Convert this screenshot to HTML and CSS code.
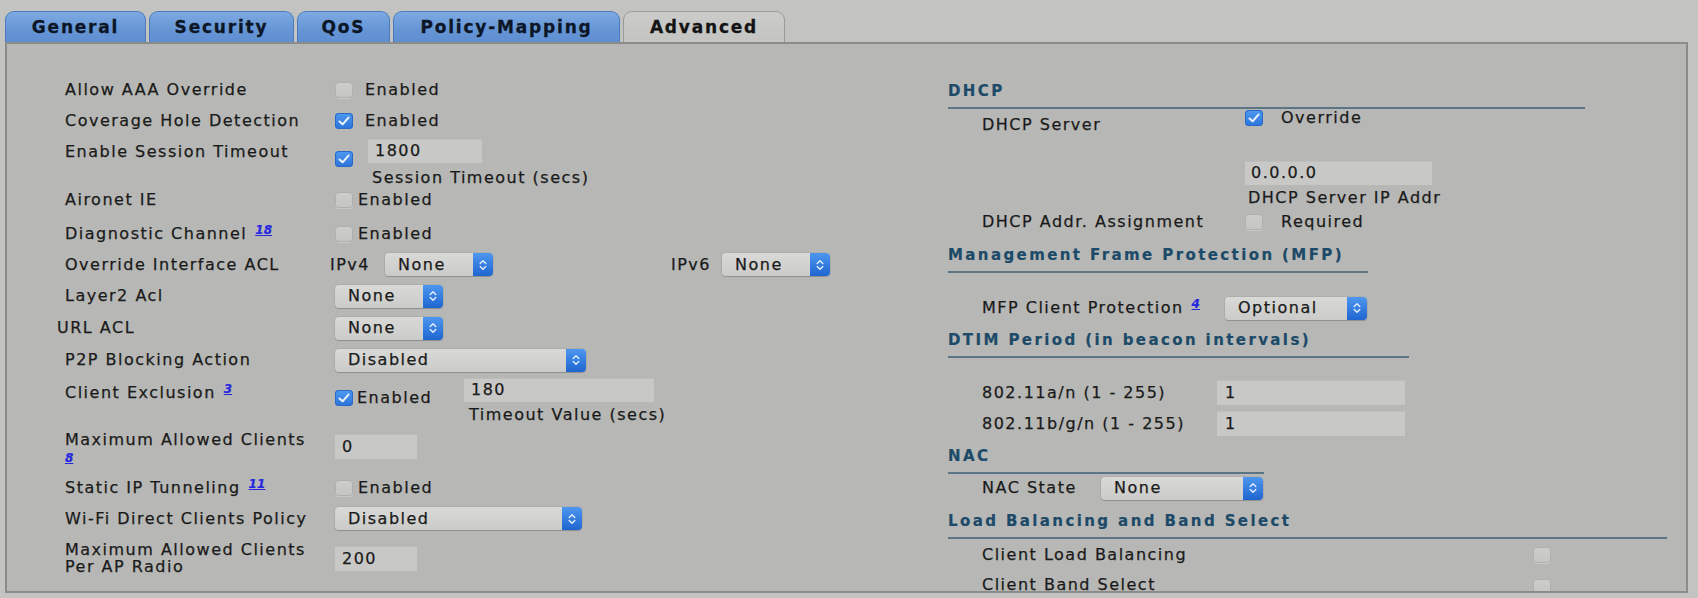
FILE: index.html
```html
<!DOCTYPE html>
<html>
<head>
<meta charset="utf-8">
<link rel="stylesheet" href="styles.css">
</head>
<body>
<div class="tabs">
  <div class="tab t-gen">General</div>
  <div class="tab t-sec">Security</div>
  <div class="tab t-qos">QoS</div>
  <div class="tab t-pol">Policy-Mapping</div>
  <div class="tab t-adv active">Advanced</div>
</div>
<div class="panel">
  <div class="left">
    <div class="row">
      <div class="lbl">Allow AAA Override</div>
      <div class="ctl"><span class="cb"></span><span>Enabled</span></div>
    </div>
    <div class="row">
      <div class="lbl">Coverage Hole Detection</div>
      <div class="ctl"><span class="cb on"><svg viewBox="0 0 18 16"><path d="M4.5 8.5 L7.6 11.3 L13.5 4.6"/></svg></span><span>Enabled</span></div>
    </div>
    <div class="row r-sess">
      <div class="lbl">Enable Session Timeout</div>
      <div class="stack">
        <div class="sess-top">
          <span class="cb on"><svg viewBox="0 0 18 16"><path d="M4.5 8.5 L7.6 11.3 L13.5 4.6"/></svg></span>
          <div class="inp i-sess">1800</div>
        </div>
        <div class="sub sub-sess">Session Timeout (secs)</div>
      </div>
    </div>
    <div class="row r32">
      <div class="lbl">Aironet IE</div>
      <div class="ctl tight"><span class="cb"></span><span>Enabled</span></div>
    </div>
    <div class="row r33">
      <div class="lbl">Diagnostic Channel<a class="ref">18</a></div>
      <div class="ctl tight"><span class="cb"></span><span>Enabled</span></div>
    </div>
    <div class="row r31">
      <div class="lbl">Override Interface ACL</div>
      <div class="acl">
        <span class="ip">IPv4</span>
        <div class="sel s108"><span>None</span><i class="arr"><svg viewBox="0 0 10 16"><path d="M2.2 6.6 L5 3.8 L7.8 6.6 M2.2 9.4 L5 12.2 L7.8 9.4"/></svg></i></div>
        <span class="ip ip6">IPv6</span>
        <div class="sel s108"><span>None</span><i class="arr"><svg viewBox="0 0 10 16"><path d="M2.2 6.6 L5 3.8 L7.8 6.6 M2.2 9.4 L5 12.2 L7.8 9.4"/></svg></i></div>
      </div>
    </div>
    <div class="row r32">
      <div class="lbl">Layer2 Acl</div>
      <div class="sel s108"><span>None</span><i class="arr"><svg viewBox="0 0 10 16"><path d="M2.2 6.6 L5 3.8 L7.8 6.6 M2.2 9.4 L5 12.2 L7.8 9.4"/></svg></i></div>
    </div>
    <div class="row r32">
      <div class="lbl lbl-url">URL ACL</div>
      <div class="sel s108"><span>None</span><i class="arr"><svg viewBox="0 0 10 16"><path d="M2.2 6.6 L5 3.8 L7.8 6.6 M2.2 9.4 L5 12.2 L7.8 9.4"/></svg></i></div>
    </div>
    <div class="row r32">
      <div class="lbl">P2P Blocking Action</div>
      <div class="sel s251"><span>Disabled</span><i class="arr"><svg viewBox="0 0 10 16"><path d="M2.2 6.6 L5 3.8 L7.8 6.6 M2.2 9.4 L5 12.2 L7.8 9.4"/></svg></i></div>
    </div>
    <div class="row r-excl">
      <div class="lbl">Client Exclusion<a class="ref">3</a></div>
      <div class="excl">
        <div class="excl-cb"><span class="cb on"><svg viewBox="0 0 18 16"><path d="M4.5 8.5 L7.6 11.3 L13.5 4.6"/></svg></span><span>Enabled</span></div>
        <div class="stack">
          <div class="inp i-excl">180</div>
          <div class="sub sub-excl">Timeout Value (secs)</div>
        </div>
      </div>
    </div>
    <div class="row r-max">
      <div class="lbl two">Maximum Allowed Clients<br><a class="ref ref-line">8</a></div>
      <div class="inp i-small i-max">0</div>
    </div>
    <div class="row">
      <div class="lbl">Static IP Tunneling<a class="ref">11</a></div>
      <div class="ctl tight"><span class="cb"></span><span>Enabled</span></div>
    </div>
    <div class="row">
      <div class="lbl">Wi-Fi Direct Clients Policy</div>
      <div class="sel s247"><span>Disabled</span><i class="arr"><svg viewBox="0 0 10 16"><path d="M2.2 6.6 L5 3.8 L7.8 6.6 M2.2 9.4 L5 12.2 L7.8 9.4"/></svg></i></div>
    </div>
    <div class="row r-radio">
      <div class="lbl two two-radio">Maximum Allowed Clients<br>Per AP Radio</div>
      <div class="inp i-small i-radio">200</div>
    </div>
  </div>

  <div class="right">
    <div class="sect w-dhcp">DHCP</div>
    <div class="rrow r-dhcp">
      <div class="rl rl-dhcp">DHCP Server</div>
      <div class="stack">
        <div class="ctl rc"><span class="cb on"><svg viewBox="0 0 18 16"><path d="M4.5 8.5 L7.6 11.3 L13.5 4.6"/></svg></span><span>Override</span></div>
        <div class="inp i-ip">0.0.0.0</div>
        <div class="sub sub-ip">DHCP Server IP Addr</div>
      </div>
    </div>
    <div class="rrow r-assign">
      <div class="rl rl-dhcp">DHCP Addr. Assignment</div>
      <div class="ctl rc"><span class="cb"></span><span>Required</span></div>
    </div>

    <div class="sect w-mfp m-mfp">Management Frame Protection (MFP)</div>
    <div class="rrow r-mfp">
      <div class="rl rl-mfp">MFP Client Protection<a class="ref">4</a></div>
      <div class="sel s142"><span>Optional</span><i class="arr"><svg viewBox="0 0 10 16"><path d="M2.2 6.6 L5 3.8 L7.8 6.6 M2.2 9.4 L5 12.2 L7.8 9.4"/></svg></i></div>
    </div>

    <div class="sect w-dtim m-dtim">DTIM Period (in beacon intervals)</div>
    <div class="rrow r-dt first">
      <div class="rl rl-dt">802.11a/n (1 - 255)</div>
      <div class="inp i-dt">1</div>
    </div>
    <div class="rrow r-dt">
      <div class="rl rl-dt">802.11b/g/n (1 - 255)</div>
      <div class="inp i-dt">1</div>
    </div>

    <div class="sect w-nac m-nac">NAC</div>
    <div class="rrow r-nac">
      <div class="rl rl-nac">NAC State</div>
      <div class="sel s162"><span>None</span><i class="arr"><svg viewBox="0 0 10 16"><path d="M2.2 6.6 L5 3.8 L7.8 6.6 M2.2 9.4 L5 12.2 L7.8 9.4"/></svg></i></div>
    </div>

    <div class="sect w-lb m-lb">Load Balancing and Band Select</div>
    <div class="rrow r-lb1">
      <div class="rl rl-lb">Client Load Balancing</div>
      <span class="cb"></span>
    </div>
    <div class="rrow r-lb2">
      <div class="rl rl-lb">Client Band Select</div>
      <span class="cb"></span>
    </div>
  </div>
</div>
</body>
</html>
```

FILE: styles.css
```css
* { box-sizing: border-box; }

body {
  margin: 0;
  width: 1698px;
  height: 598px;
  overflow: hidden;
  background: #c3c4c1;
  font-family: "DejaVu Sans", Verdana, sans-serif;
  font-size: 16px;
  line-height: 20px;
  letter-spacing: 1.5px;
  color: #1a1a1a;
  -webkit-text-stroke: 0.25px #1a1a1a;
}

/* ---------- tabs ---------- */
.tabs {
  display: flex;
  gap: 3px;
  height: 42px;
  padding: 11px 0 0 5px;
}
.tab {
  height: 31px;
  display: flex;
  align-items: center;
  justify-content: center;
  font-weight: bold;
  font-size: 17px;
  letter-spacing: 1.8px;
  color: #0c1627;
  -webkit-text-stroke: 0.3px #0c1627;
  background: linear-gradient(#7eaae2, #6595d5 60%, #5f8fd0);
  border: 1px solid #4c7bbd;
  border-bottom: none;
  border-radius: 9px 9px 0 0;
}
.t-gen { width: 141px; }
.t-sec { width: 145px; }
.t-qos { width: 93px; }
.t-pol { width: 227px; }
.t-adv { width: 162px; }
.tab.active {
  background: linear-gradient(#cbccc9, #c4c5c2);
  border-color: #9a9b98;
  color: #141414;
  -webkit-text-stroke: 0.3px #141414;
}

/* ---------- panel ---------- */
.panel {
  margin-left: 5px;
  width: 1683px;
  height: 551px;
  border: 2px solid #8b8c89;
  background: #b7b8b5;
  display: flex;
  overflow: hidden;
}
.left {
  width: 941px;
  flex: none;
  padding: 30px 0 0 58px;
}
.right {
  flex: 1;
  padding-top: 37px;
}

/* ---------- rows (left) ---------- */
.row {
  display: flex;
  align-items: center;
  height: 31px;
  white-space: nowrap;
}
.row.r31 { height: 31px; }
.row.r32 { height: 32px; }
.row.r33 { height: 33px; padding-top: 2px; }
.lbl {
  width: 270px;
  flex: none;
}
.lbl-url {
  margin-left: -8px;
  width: 278px;
}
.ctl {
  display: flex;
  align-items: center;
  gap: 12px;
}
.ctl.tight { gap: 5px; }

.r-sess {
  height: 48px;
  align-items: flex-start;
}
.r-sess .lbl { padding-top: 6px; }
.stack {
  display: flex;
  flex-direction: column;
  align-items: flex-start;
}
.sess-top {
  display: flex;
  align-items: flex-start;
  gap: 15px;
  margin-top: 3px;
}
.sess-top .cb { margin-top: 12px; }
.sub { line-height: 20px; }
.sub-sess { margin: 1px 0 0 37px; }

.r-excl {
  height: 50px;
  align-items: flex-start;
}
.r-excl .lbl { padding-top: 7px; }
.excl { display: flex; align-items: flex-start; }
.excl-cb {
  width: 129px;
  display: flex;
  align-items: center;
  gap: 4px;
  margin-top: 12px;
}
.excl .stack { margin-top: 2px; }
.sub-excl { margin: 3px 0 0 5px; }

.r-max {
  height: 46px;
  align-items: flex-start;
}
.two {
  line-height: 17px;
  padding-top: 5px;
}
.two-radio { padding-top: 7px; }
.r-radio {
  height: 46px;
  align-items: flex-start;
}
.i-max { margin-top: 8px; }
.i-radio { margin-top: 12px; }

/* ---------- override ACL ---------- */
.acl {
  display: flex;
  align-items: center;
  margin-left: -5px;
}
.ip { width: 55px; flex: none; }
.ip6 { width: 51px; margin-left: 178px; }

/* ---------- controls ---------- */
.cb {
  width: 18px;
  height: 16px;
  flex: none;
  border-radius: 4px;
  background: linear-gradient(#cdcecb, #c5c6c3);
  box-shadow: inset 0 0 0 1px #b0b1ae, 0 1px 0 rgba(255,255,255,0.25);
  display: inline-block;
}
.cb.on {
  background: linear-gradient(#4f9af0, #2a73db);
  box-shadow: inset 0 0 0 1px #2a69c7;
}
.cb svg { display: block; width: 18px; height: 16px; }
.cb svg path {
  fill: none;
  stroke: #eef4fc;
  stroke-width: 2;
  stroke-linecap: round;
  stroke-linejoin: round;
}

.inp {
  height: 24px;
  line-height: 24px;
  padding-left: 7px;
  background: #c8c9c6;
  box-shadow: inset 0 1px 0 #bebfbc;
  flex: none;
}
.i-sess { width: 114px; }
.i-excl { width: 190px; }
.i-small { width: 82px; height: 25px; line-height: 25px; }
.i-ip { width: 187px; margin-top: 34px; padding-left: 6px; }
.i-dt { width: 188px; height: 25px; line-height: 25px; padding-left: 8px; }

.sel {
  height: 23px;
  display: flex;
  align-items: center;
  flex: none;
  padding-left: 13px;
  border-radius: 4px;
  background: linear-gradient(#d9dad7, #cbccc9);
  box-shadow: 0 1px 1px rgba(0,0,0,0.18), 0 0 0 1px rgba(0,0,0,0.05);
}
.sel .arr {
  margin-left: auto;
  width: 20px;
  height: 23px;
  border-radius: 0 4px 4px 0;
  background: linear-gradient(#4d97ef, #1f65d0);
  display: flex;
  align-items: center;
  justify-content: center;
}
.sel .arr svg { width: 10px; height: 16px; display: block; }
.sel .arr path {
  fill: none;
  stroke: #e3edfb;
  stroke-width: 1.4;
  stroke-linecap: round;
  stroke-linejoin: round;
}
.s108 { width: 108px; }
.s251 { width: 251px; }
.s247 { width: 247px; }
.s142 { width: 142px; }
.s162 { width: 162px; }

.ref {
  color: #2626e0;
  -webkit-text-stroke: 0.2px #2626e0;
  font-weight: bold;
  font-style: italic;
  font-size: 12px;
  letter-spacing: 0;
  text-decoration: underline;
  vertical-align: 5px;
  margin-left: 8px;
  line-height: 10px;
}
.ref-line {
  margin-left: 0;
  vertical-align: 0;
}

/* ---------- right column ---------- */
.sect {
  font-weight: bold;
  font-size: 15px;
  color: #1c4a68;
  -webkit-text-stroke: 0.2px #1c4a68;
  letter-spacing: 2.4px;
  line-height: 20px;
  padding-bottom: 6px;
  border-bottom: 2px solid #5c7585;
  white-space: nowrap;
}
.w-dhcp { width: 637px; }
.w-mfp { width: 420px; }
.w-dtim { width: 461px; }
.w-nac { width: 316px; }
.w-lb { width: 719px; }
.m-mfp { margin-top: 9px; }
.m-dtim { margin-top: 7px; }
.m-nac { margin-top: 7px; }
.m-lb { margin-top: 8px; }

.rrow {
  display: flex;
  align-items: center;
  white-space: nowrap;
}
.rl {
  flex: none;
  padding-left: 34px;
}
.rl-dhcp { width: 297px; }
.r-dhcp { align-items: flex-start; }
.r-dhcp .rl { padding-top: 6px; }
.rc { gap: 18px; height: 18px; }
.sub-ip { margin: 3px 0 0 3px; }
.r-assign { height: 28px; }

.r-mfp { height: 30px; margin-top: 20px; }
.rl-mfp { width: 277px; }

.r-dt { height: 31px; }
.r-dt.first { margin-top: 19px; }
.rl-dt { width: 269px; }

.r-nac { height: 30px; margin-top: -1px; }
.rl-nac { width: 153px; }

.r-lb1 { height: 30px; margin-top: 1px; }
.r-lb2 {
  height: 22px;
  align-items: flex-start;
  padding-top: 8px;
}
.r-lb2 .rl { line-height: 14px; }
.r-lb2 .cb { margin-top: 1px; }
.rl-lb { width: 585px; }
```
